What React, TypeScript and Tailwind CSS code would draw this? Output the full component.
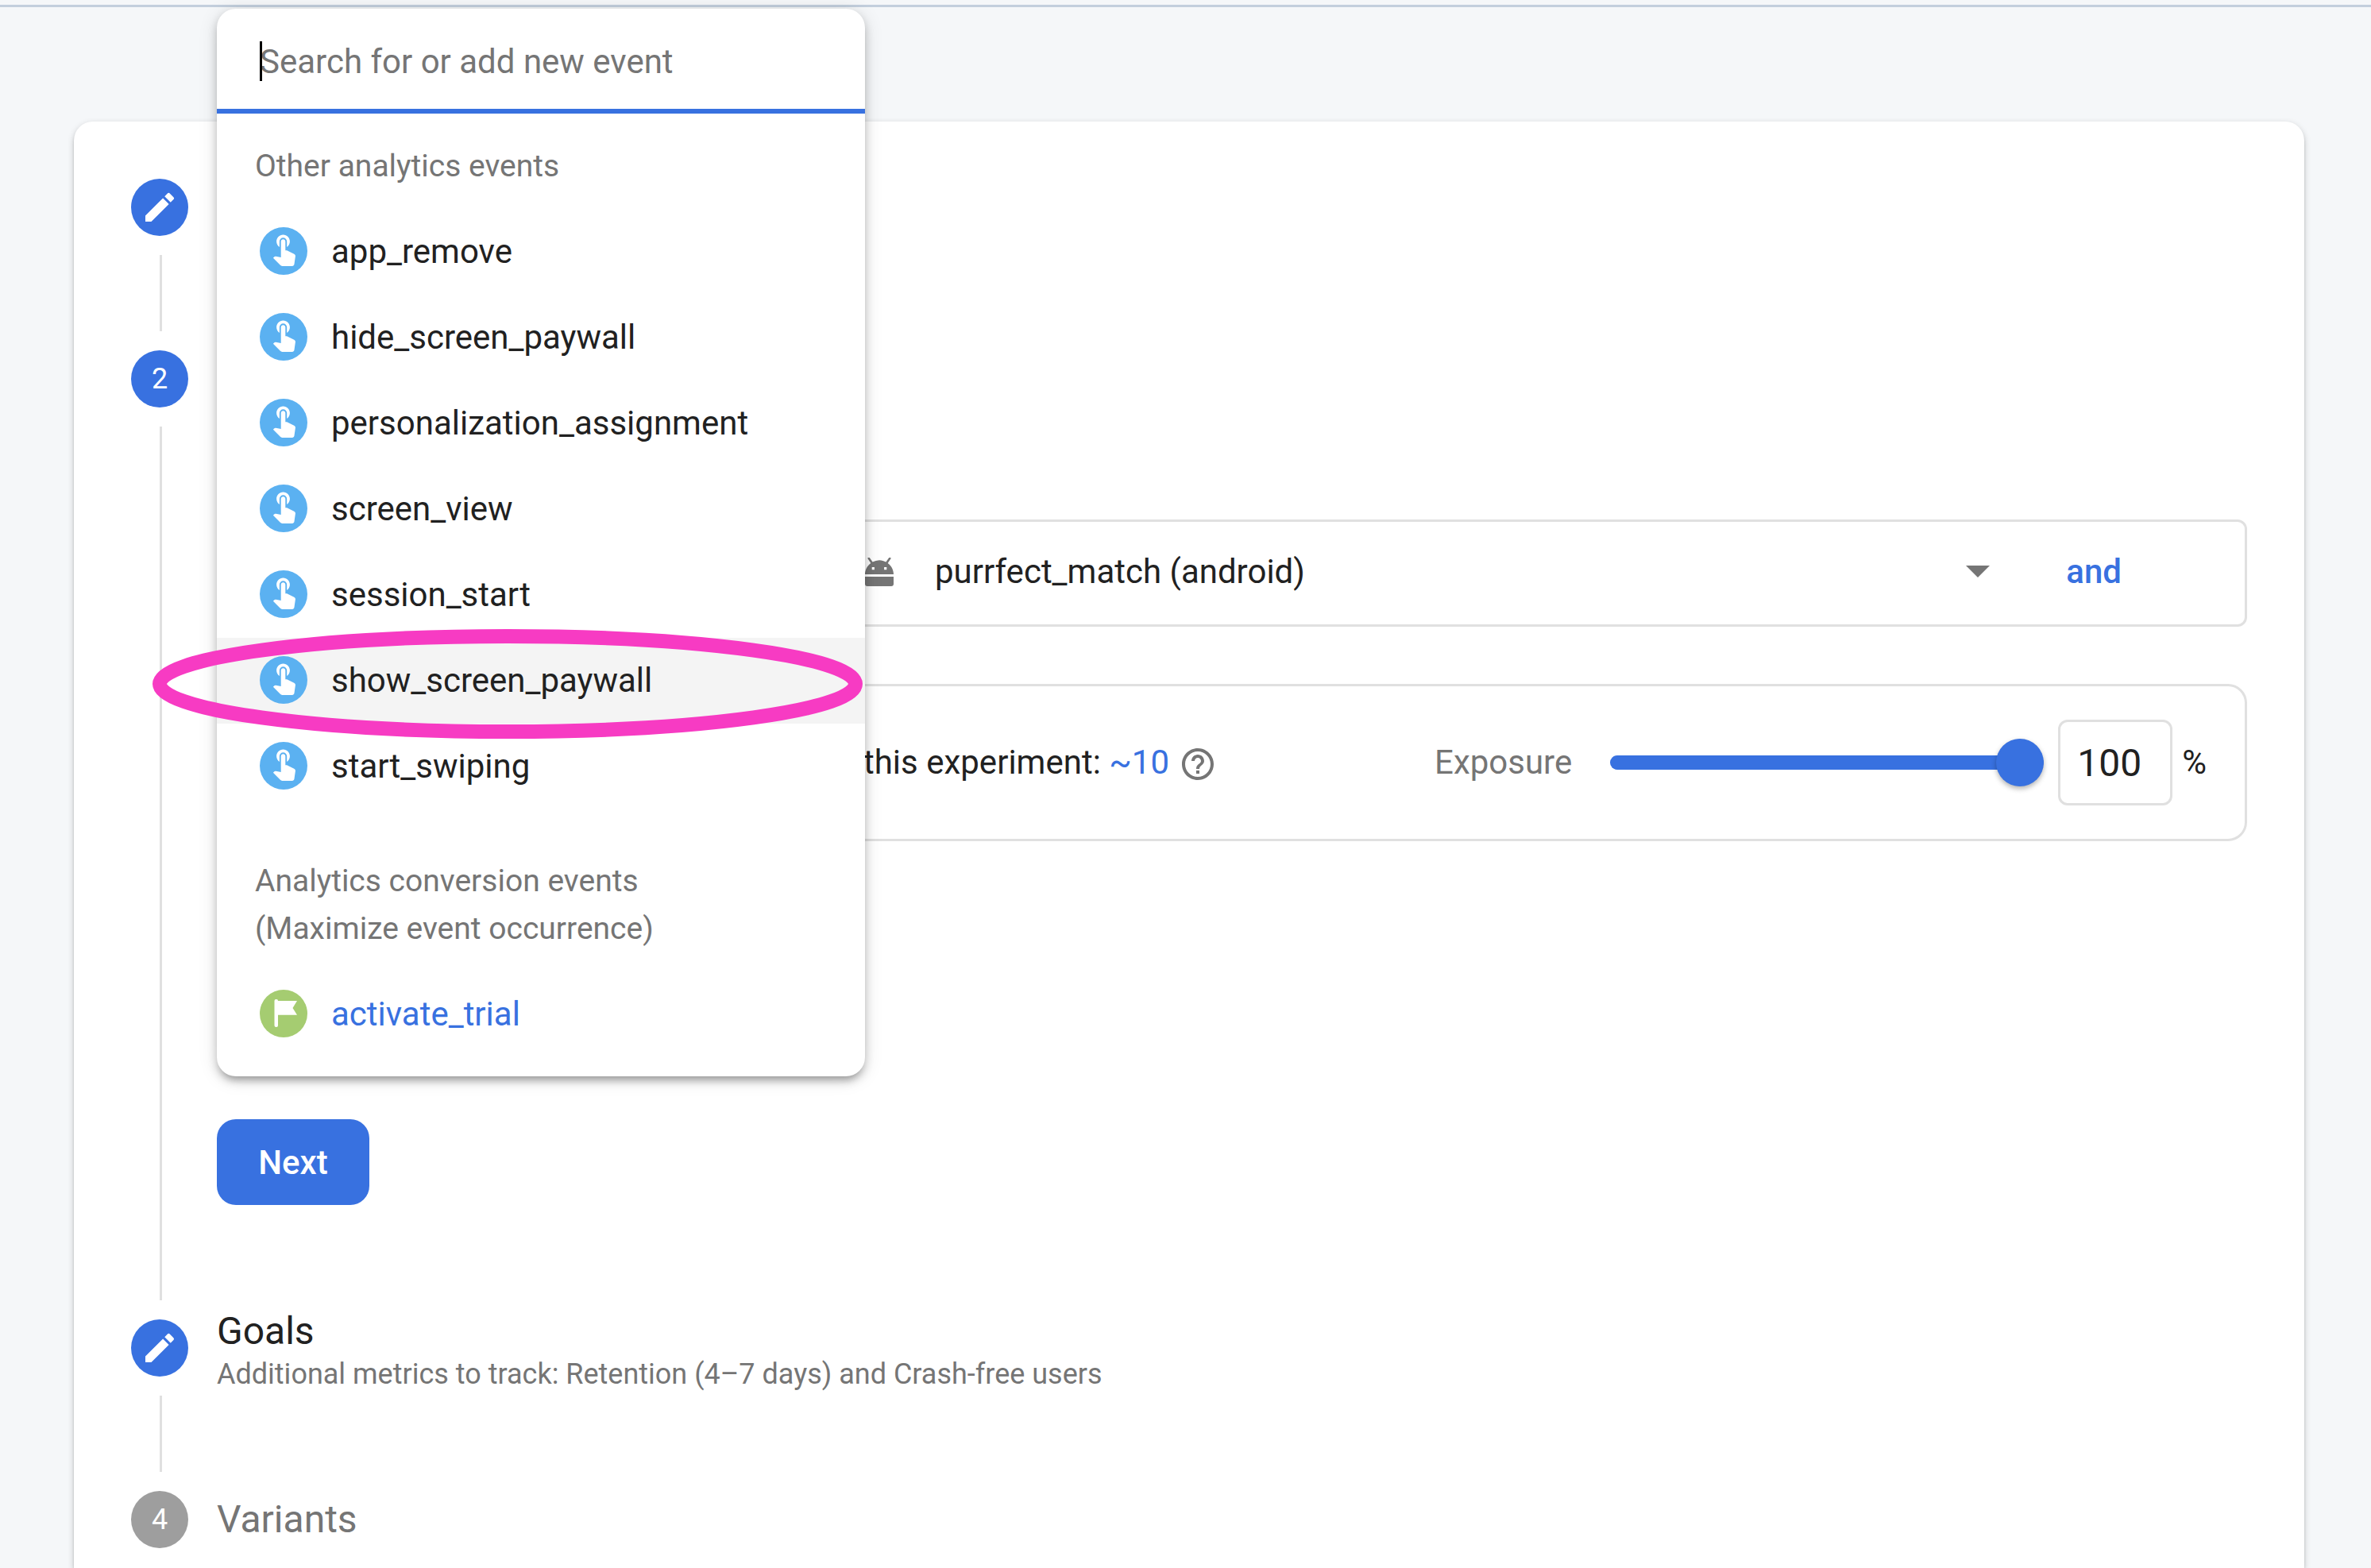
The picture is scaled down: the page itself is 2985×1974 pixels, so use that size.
import { useState } from "react";
import type { ReactNode } from "react";
import { MdEdit, MdHelpOutline } from "react-icons/md";

const analyticsEvents = [
  "app_remove",
  "hide_screen_paywall",
  "personalization_assignment",
  "screen_view",
  "session_start",
  "show_screen_paywall",
  "start_swiping",
];

function TouchIcon() {
  return (
    <svg viewBox="0 0 60 60" className="size-[60px] shrink-0" aria-hidden="true">
      <circle cx="30" cy="30" r="30" fill="#5bb1f1" />
      <g transform="translate(8 4) scale(1.87)" fill="#fff">
        <path d="M9 11.24V7.5a2.5 2.5 0 0 1 5 0v3.74c1.21-.81 2-2.18 2-3.74C16 5.01 13.99 3 11.5 3S7 5.01 7 7.5c0 1.56.79 2.93 2 3.74zm9.84 4.63-4.54-2.26c-.17-.07-.35-.11-.54-.11H13v-6c0-.83-.67-1.5-1.5-1.5S10 6.67 10 7.5v10.74l-3.43-.72c-.08-.01-.15-.03-.24-.03-.31 0-.59.13-.79.33l-.79.8 4.94 4.94c.27.27.65.44 1.06.44h6.79c.75 0 1.33-.55 1.44-1.28l.75-5.27c.01-.07.02-.14.02-.2 0-.62-.38-1.16-.91-1.38z" />
      </g>
    </svg>
  );
}

function FlagIcon() {
  return (
    <svg viewBox="0 0 60 60" className="size-[60px] shrink-0" aria-hidden="true">
      <circle cx="30" cy="30" r="30" fill="#a5cc71" />
      <rect x="18.5" y="12" width="4.5" height="35" rx="2" fill="#fff" />
      <path d="M22 14h25l-5.5 9L47 31.7H22z" fill="#fff" />
    </svg>
  );
}

function AndroidIcon() {
  return (
    <svg viewBox="0 0 36 36" className="size-9 shrink-0" fill="#757575" aria-hidden="true">
      <path
        d="M3.5 0h2.2l3.9 5.6A17.5 17.5 0 0 1 18 3.2c3.1 0 6 .9 8.4 2.4L30.3 0h2.2v1.2L28.7 7C33 10.2 36 15.4 36 21H0C0 15.4 3 10.2 7.3 7L3.5 1.2zM8.700 12v3.200h3.200V12zm15.400 0v3.200h3.200V12z"
        fillRule="evenodd"
      />
      <path d="M0 24h36v9a3 3 0 0 1-3 3H3a3 3 0 0 1-3-3z" />
    </svg>
  );
}

type StepProps = {
  marker: ReactNode;
  muted?: boolean;
  last?: boolean;
  children?: ReactNode;
};

function Step({ marker, muted, last, children }: StepProps) {
  return (
    <li className="flex gap-9">
      <div className="flex w-[72px] shrink-0 flex-col gap-6">
        <span
          className={
            "flex size-[72px] shrink-0 items-center justify-center rounded-full text-[36px] text-white " +
            (muted ? "bg-[#9e9e9e]" : "bg-[#3871e0]")
          }
        >
          {marker}
        </span>
        {!last && <span className="mb-6 ml-9 min-h-24 w-[3px] flex-1 bg-[#e0e0e0]" />}
      </div>
      <div className="min-w-0 flex-1">{children}</div>
    </li>
  );
}

function EventMenu() {
  const [query, setQuery] = useState("");
  return (
    <div
      role="dialog"
      aria-label="Select event"
      className="absolute top-[11px] left-[273px] w-[816px] rounded-[24px] bg-white pb-6 shadow-[0_9px_9px_-6px_rgba(0,0,0,0.2),0_6px_12px_0_rgba(0,0,0,0.2),0_3px_24px_0_rgba(0,0,0,0.12)]"
    >
      <div className="relative flex h-[132px] items-center border-b-[6px] border-[#3871e0] px-[54px] pt-2">
        <input
          type="text"
          aria-label="Search for or add new event"
          placeholder="Search for or add new event"
          value={query}
          onChange={(e) => setQuery(e.target.value)}
          className="w-full bg-transparent text-[42px] leading-[60px] text-[#212121] caret-transparent outline-none placeholder:text-[#757575]"
        />
        <span className="absolute top-[41px] left-[54px] h-[50px] w-[3px] bg-black" />
      </div>

      <h3 className="px-12 pt-9 pb-6 text-[39px] leading-[60px] text-[#757575]">
        Other analytics events
      </h3>
      <ul>
        {analyticsEvents.map((name) => {
          const marked = name === "show_screen_paywall";
          return (
            <li key={name} className="relative">
              <button
                type="button"
                className={
                  "flex h-[108px] w-full items-center gap-[30px] px-[54px] pb-[2px] text-left text-[42px] text-[#212121] " +
                  (marked ? "bg-[#f4f4f4]" : "bg-white")
                }
              >
                <TouchIcon />
                {name}
              </button>
              {marked && (
                <svg
                  viewBox="0 0 894 138"
                  className="pointer-events-none absolute -top-[11px] -left-[81px] z-10 h-[138px] w-[894px] max-w-none"
                  aria-hidden="true"
                >
                  <ellipse cx="447" cy="69" rx="438" ry="60" fill="none" stroke="#f73bc3" strokeWidth="18" />
                </svg>
              )}
            </li>
          );
        })}
      </ul>

      <h3 className="px-12 pt-[60px] pb-6 text-[39px] leading-[60px] text-[#757575]">
        Analytics conversion events
        <br />
        (Maximize event occurrence)
      </h3>
      <ul>
        <li>
          <button
            type="button"
            className="flex h-[108px] w-full items-center gap-[30px] px-[54px] pb-[2px] text-left text-[42px] text-[#3871e0]"
          >
            <FlagIcon />
            activate_trial
          </button>
        </li>
      </ul>
    </div>
  );
}

function AppRow() {
  return (
    <div className="flex h-[135px] items-center rounded-[12px] border-[3px] border-[#e0e0e0] pr-[155px] pb-1 pl-[813px]">
      <AndroidIcon />
      <div className="relative flex flex-1 items-center">
        <select
          aria-label="App"
          className="w-full appearance-none bg-transparent pl-[52px] text-[42px] leading-[60px] text-[#212121] outline-none"
        >
          <option>purrfect_match (android)</option>
        </select>
        <svg
          viewBox="0 0 30 15"
          className="pointer-events-none absolute right-0 h-[15px] w-[30px]"
          fill="#757575"
          aria-hidden="true"
        >
          <path d="M0 0h30L15 15z" />
        </svg>
      </div>
      <button type="button" className="ml-24 text-[42px] leading-[60px] font-medium text-[#3871e0]">
        and
      </button>
    </div>
  );
}

function ExposureRow() {
  const [exposure, setExposure] = useState("100");
  return (
    <div className="mt-[72px] flex h-[198px] items-center rounded-[24px] border-[3px] border-[#e0e0e0] pr-12 pl-[811px] text-[42px] leading-[60px] text-[#212121]">
      <p className="whitespace-nowrap">
        this experiment: <span className="text-[#3871e0]">~10</span>
      </p>
      <button type="button" aria-label="Help" className="ml-3 pt-1 text-[#757575]">
        <MdHelpOutline className="size-12" />
      </button>
      <label htmlFor="exposure" className="ml-auto pr-12 text-[#757575]">
        Exposure
      </label>
      <input
        id="exposure"
        type="range"
        min="0"
        max="100"
        value={exposure}
        onChange={(e) => setExposure(e.target.value)}
        className="h-[60px] w-[546px] appearance-none bg-transparent [&::-webkit-slider-runnable-track]:h-[18px] [&::-webkit-slider-runnable-track]:rounded-full [&::-webkit-slider-runnable-track]:bg-[#3871e0] [&::-webkit-slider-thumb]:-mt-[21px] [&::-webkit-slider-thumb]:size-[60px] [&::-webkit-slider-thumb]:appearance-none [&::-webkit-slider-thumb]:rounded-full [&::-webkit-slider-thumb]:bg-[#3871e0] [&::-webkit-slider-thumb]:shadow-[0_3px_6px_rgba(0,0,0,0.3)]"
      />
      <input
        type="text"
        aria-label="Exposure percent"
        value={exposure}
        onChange={(e) => setExposure(e.target.value)}
        className="ml-[18px] h-[108px] w-36 rounded-[12px] border-[3px] border-[#e0e0e0] px-[21px] text-[48px] outline-none"
      />
      <span className="pl-3">%</span>
    </div>
  );
}

export default function App() {
  return (
    <div className="relative flex min-h-screen flex-col bg-[#f5f7f9] font-['Roboto',sans-serif] text-[#212121]">
      <header className="h-[9px] border-b-[3px] border-[#c3cfdd]" />
      <main className="flex flex-1 flex-col pt-36 pr-[84px] pl-[93px]">
        <section className="flex-1 rounded-t-[24px] bg-white px-[72px] pt-[72px] pb-6 shadow-[0_6px_3px_-3px_rgba(0,0,0,0.2),0_3px_3px_0_rgba(0,0,0,0.14),0_3px_9px_0_rgba(0,0,0,0.2)]">
          <ol>
            <Step marker={<MdEdit className="size-12" />} />
            <Step marker="2">
              <div className="pt-[213px] pb-36">
                <AppRow />
                <ExposureRow />
                <button
                  type="button"
                  className="mt-[350px] h-[108px] min-w-48 rounded-[24px] bg-[#3871e0] px-12 text-[42px] font-medium text-white"
                >
                  Next
                </button>
              </div>
            </Step>
            <Step marker={<MdEdit className="size-12" />}>
              <div className="flex h-[72px] flex-col justify-center pt-[6px]">
                <h2 className="text-[48px] leading-[60px]">Goals</h2>
                <p className="text-[36px] leading-[48px] text-[#757575]">
                  Additional metrics to track: Retention (4–7 days) and Crash-free users
                </p>
              </div>
            </Step>
            <Step marker="4" muted last>
              <h2 className="text-[48px] leading-[72px] text-[#757575]">Variants</h2>
            </Step>
          </ol>
        </section>
      </main>
      <EventMenu />
    </div>
  );
}
